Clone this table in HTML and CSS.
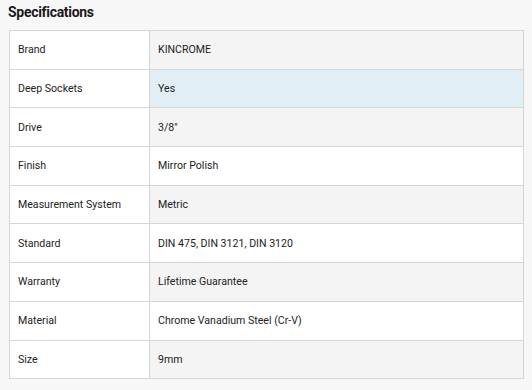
FILE: index.html
```html
<!DOCTYPE html>
<html>
<head>
<meta charset="utf-8">
<link rel="stylesheet" href="styles.css">
</head>
<body>
<div class="wrap">
  <h2 class="title">Specifications</h2>
  <table class="specs">
    <tr><td class="k">Brand</td><td class="v">KINCROME</td></tr>
    <tr class="hover"><td class="k">Deep Sockets</td><td class="v">Yes</td></tr>
    <tr><td class="k">Drive</td><td class="v">3/8"</td></tr>
    <tr><td class="k">Finish</td><td class="v">Mirror Polish</td></tr>
    <tr><td class="k">Measurement System</td><td class="v">Metric</td></tr>
    <tr><td class="k">Standard</td><td class="v">DIN 475, DIN 3121, DIN 3120</td></tr>
    <tr><td class="k">Warranty</td><td class="v">Lifetime Guarantee</td></tr>
    <tr><td class="k">Material</td><td class="v">Chrome Vanadium Steel (Cr-V)</td></tr>
    <tr><td class="k">Size</td><td class="v">9mm</td></tr>
  </table>
</div>
</body>
</html>
```
FILE: styles.css
```css
html, body {
  margin: 0;
  padding: 0;
  background: #f7f7f7;
}
body {
  font-family: Roboto, "Liberation Sans", sans-serif;
  color: #222;
}
.wrap {
  padding: 3px 8px 0 9px;
}
.title {
  margin: 0 0 0 -1px;
  font-size: 14px;
  font-weight: 700;
  line-height: 18px;
  height: 27px;
  letter-spacing: -0.3px;
  color: #1a1a1a;
}
.specs {
  width: 515px;
  border-collapse: collapse;
  border: 1px solid #d6d6d6;
  font-size: 10.6px;
}
.specs td {
  height: 37.7px;
  padding: 0 8px;
  border: 1px solid #d6d6d6;
  vertical-align: middle;
}
.specs .k {
  width: 123px;
  background: #fff;
}
.specs tr:nth-child(odd) .v {
  background: #f4f4f4;
}
.specs tr:nth-child(even) .v {
  background: #fff;
}
.specs tr.hover .v {
  background: #e2eef5;
}
```
